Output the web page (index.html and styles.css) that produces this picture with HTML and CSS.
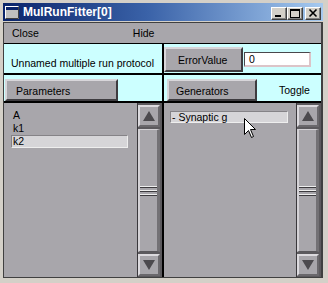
FILE: index.html
```html
<!DOCTYPE html>
<html>
<head>
<meta charset="utf-8">
<link rel="stylesheet" href="styles.css">
</head>
<body>
<div class="win">
  <div class="titlebar">
    <svg class="appicon" width="14" height="13" viewBox="0 0 14 13">
      <rect x="0" y="0" width="14" height="13" fill="#ffffff"/>
      <rect x="1" y="1" width="12" height="11" fill="#c0c0c0"/>
      <rect x="1" y="1" width="12" height="3" fill="#0a246a"/>
      <path d="M13.5 0.5V12.5H0.5" stroke="#404040" fill="none"/>
    </svg>
    <span class="title">MulRunFitter[0]</span>
    <div class="capbtns">
      <span class="capbtn"><svg width="14" height="11" viewBox="0 0 14 11"><rect x="3" y="7" width="6" height="2" fill="#000"/></svg></span>
      <span class="capbtn"><svg width="14" height="11" viewBox="0 0 14 11"><rect x="2.5" y="1.5" width="9" height="8" fill="none" stroke="#000"/><rect x="2" y="1" width="10" height="2" fill="#000"/></svg></span>
      <span class="capbtn close"><svg width="14" height="11" viewBox="0 0 14 11"><path d="M3.5 1.5L10.5 8.5M10.5 1.5L3.5 8.5" stroke="#000" stroke-width="1.6" fill="none"/></svg></span>
    </div>
  </div>
  <div class="client">
    <div class="menubar"><span>Close</span><span class="hide">Hide</span></div>
    <div class="grid">
      <div class="cell protocol">Unnamed multiple run protocol</div>
      <div class="cell errrow"><span class="btn btn-err">ErrorValue</span><span class="field">0</span></div>
      <div class="cell paramrow"><span class="btn btn-param">Parameters</span></div>
      <div class="cell genrow"><span class="btn btn-gen">Generators</span><span class="toggle">Toggle</span></div>
      <div class="listcell">
        <div class="list list-l">
          <div class="item">A</div>
          <div class="item">k1</div>
          <div class="item sel">k2</div>
        </div>
        <div class="scroll">
          <div class="sbtn"><svg width="12" height="10" viewBox="0 0 12 10"><polygon points="6,0 12,10 0,10" fill="#4c4a4e"/></svg></div>
          <div class="thumb"><div class="grip"></div></div>
          <div class="sbtn"><svg width="12" height="10" viewBox="0 0 12 10"><polygon points="0,0 12,0 6,10" fill="#4c4a4e"/></svg></div>
        </div>
      </div>
      <div class="listcell">
        <div class="list list-r">
          <div class="item sel item-r">- Synaptic g</div>
        </div>
        <div class="scroll">
          <div class="sbtn"><svg width="12" height="10" viewBox="0 0 12 10"><polygon points="6,0 12,10 0,10" fill="#4c4a4e"/></svg></div>
          <div class="thumb"><div class="grip"></div></div>
          <div class="sbtn"><svg width="12" height="10" viewBox="0 0 12 10"><polygon points="0,0 12,0 6,10" fill="#4c4a4e"/></svg></div>
        </div>
      </div>
    </div>
  </div>
  <svg class="cursor" width="13" height="21" viewBox="0 0 13 21">
    <polygon points="0.5,0.5 0.5,16.5 4.5,12.5 7.5,19.5 9.5,18.5 6.5,11.5 11.5,11.5" fill="#ffffff" stroke="#000000" stroke-width="1"/>
  </svg>
</div>
</body>
</html>
```

FILE: styles.css
```css
* { box-sizing: border-box; }
html, body { margin: 0; padding: 0; }
body {
  width: 328px;
  height: 283px;
  overflow: hidden;
  background: #d4d0c8;
  font-family: "Liberation Sans", Arial, sans-serif;
  font-size: 10.5px;
  color: #000;
}
.win {
  position: relative;
  width: 328px;
  height: 283px;
  padding: 3px 5px 5px 3px;
  background: #d4d0c8;
}
.titlebar {
  height: 18px;
  display: flex;
  align-items: center;
  padding-left: 2px;
  padding-right: 2px;
  background: linear-gradient(to right, #0a246a 0%, #3a62a8 45%, #a6caf0 100%);
}
.appicon { display: block; flex: none; }
.title {
  margin-left: 4px;
  padding-top: 1px;
  color: #fff;
  font-weight: bold;
  font-size: 12px;
  line-height: 17px;
  white-space: nowrap;
}
.capbtns {
  margin-left: auto;
  display: flex;
  align-self: flex-start;
  margin-top: 4px;
}
.capbtn {
  width: 16px;
  height: 13px;
  background: #d4d0c8;
  border: 1px solid;
  border-color: #ffffff #404040 #404040 #ffffff;
  box-shadow: inset -1px -1px #808080;
  display: flex;
}
.capbtn svg { display: block; }
.capbtn.close { margin-left: 2px; }
.client {
  margin-top: 1px;
  width: 320px;
  height: 256px;
  border-style: solid;
  border-color: #404040;
  border-width: 1px 2px 1px 1px;
  background: #a8a6ab;
}
.menubar {
  height: 21px;
  padding: 1px 0 0 8px;
  line-height: 19px;
  border-bottom: 1px solid #000;
  display: flex;
  background: #a8a6ab;
}
.hide { margin-left: 94px; }
.grid {
  display: grid;
  grid-template-columns: 158px 157px;
  grid-template-rows: 29px 26px 174px;
  gap: 2px;
  background: #000;
}
.cell { background: #ccffff; white-space: nowrap; overflow: hidden; }
.protocol {
  padding: 12px 0 0 7px;
  line-height: 14px;
}
.errrow { display: flex; align-items: flex-start; padding-top: 3px; }
.btn {
  display: flex;
  align-items: center;
  height: 22px;
  padding-top: 1px;
  line-height: 12px;
  background: #a8a6ab;
  border: 2px solid;
  border-color: #d8d6da #3e3c40 #3e3c40 #d8d6da;
  white-space: nowrap;
}
.btn-err { width: 79px; height: 25px; padding-left: 12px; }
.field {
  margin: 5px 0 0 1px;
  width: 67px;
  height: 15px;
  background: #fff;
  border-style: solid;
  border-width: 1px 2px 2px 1px;
  border-color: #4a484c #dcc4c8 #dcc4c8 #4a484c;
  padding: 1px 0 0 4px;
  line-height: 11px;
}
.paramrow { padding: 4px 0 0 1px; }
.btn-param { width: 113px; padding-left: 9px; }
.genrow { display: flex; align-items: flex-start; padding: 4px 0 0 3px; }
.btn-gen { width: 90px; padding-left: 7px; }
.toggle { margin-left: 22px; line-height: 22px; }
.listcell {
  display: flex;
  background: #a8a6ab;
  overflow: hidden;
}
.list { flex: 1; }
.list-l { padding: 6px 0 0 7px; }
.list-r { padding: 8px 0 0 6px; }
.item {
  width: 117px;
  height: 13px;
  border: 1px solid transparent;
  padding-left: 1px;
  line-height: 11px;
  white-space: nowrap;
}
.item.sel {
  background: #d6d5d8;
  border-color: #858387 #eeeeee #eeeeee #858387;
}
.item-r { width: 118px; height: 12px; line-height: 10px; }
.scroll {
  width: 25px;
  flex: none;
  display: flex;
  flex-direction: column;
  gap: 2px;
  padding: 2px 2px 1px 0;
  background: #5c5a5e;
  border-left: 1px solid #3a383c;
}
.sbtn {
  height: 22px;
  flex: none;
  display: flex;
  align-items: center;
  justify-content: center;
  background: #a8a6ab;
  border: 2px solid;
  border-color: #dcdade #6a686c #6a686c #dcdade;
}
.sbtn svg { display: block; }
.thumb {
  flex: 1;
  display: flex;
  align-items: center;
  background: #a8a6ab;
  border-style: solid;
  border-width: 1px 3px 1px 2px;
  border-color: #d4d2d6 #737175 #5a585c #d4d2d6;
}
.grip {
  width: 100%;
  height: 10px;
  background: linear-gradient(#eeeeee 0 1px, #3c3a3e 1px 2px, transparent 2px 4px, #eeeeee 4px 5px, #3c3a3e 5px 6px, transparent 6px 8px, #eeeeee 8px 9px, #3c3a3e 9px 10px);
}
.cursor {
  position: absolute;
  left: 244px;
  top: 118px;
  display: block;
}
```
